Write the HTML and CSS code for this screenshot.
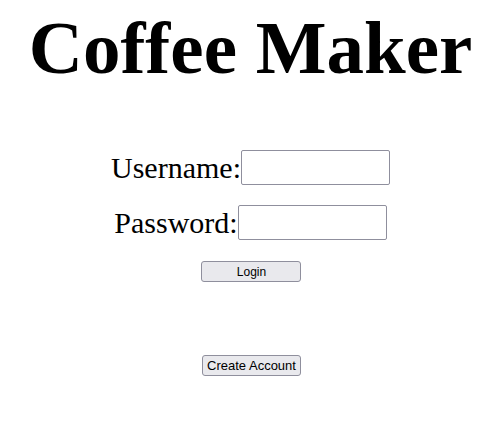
FILE: index.html
```html
<!DOCTYPE html>
<html>
<head>
<meta charset="utf-8">
<link rel="stylesheet" href="styles.css">
</head>
<body>
<div class="page">
  <h1 class="title">Coffee Maker</h1>
  <form class="login">
    <div class="row"><label class="label">Username:</label><input class="field" type="text"></div>
    <div class="row"><label class="label">Password:</label><input class="field" type="password"></div>
    <button type="button" class="btn btn-login">Login</button>
  </form>
  <button type="button" class="btn btn-create">Create Account</button>
</div>
</body>
</html>
```
FILE: styles.css
```css
html, body { margin: 0; padding: 0; background: #fff; }
body { font-family: "Liberation Serif", "Times New Roman", serif; color: #000; }
.page {
  display: flex;
  flex-direction: column;
  align-items: center;
  padding-top: 8px;
  padding-right: 2px;
}
.title {
  margin: 0;
  font-size: 75px;
  font-weight: bold;
  line-height: 80px;
}
.login {
  display: flex;
  flex-direction: column;
  align-items: center;
  margin-top: 62px;
  gap: 20px;
}
.row {
  display: flex;
  align-items: center;
}
.label { font-size: 30px; line-height: 35px; }
.field {
  box-sizing: border-box;
  width: 149px;
  height: 35px;
  margin: 0;
  border: 1px solid #8f8f9d;
  border-radius: 2px;
  font-size: 13px;
}
.btn {
  box-sizing: border-box;
  height: 21px;
  padding: 0;
  margin-left: 2px;
  border: 1px solid #8f8f9d;
  border-radius: 3px;
  background: #e9e9ed;
  font-family: "Liberation Sans", Arial, sans-serif;
  font-size: 13px;
  color: #000;
  white-space: nowrap;
}
.btn-login { width: 100px; font-size: 12px; margin-top: 1px; }
.btn-create { margin-top: 73px; width: 99px; }
```
